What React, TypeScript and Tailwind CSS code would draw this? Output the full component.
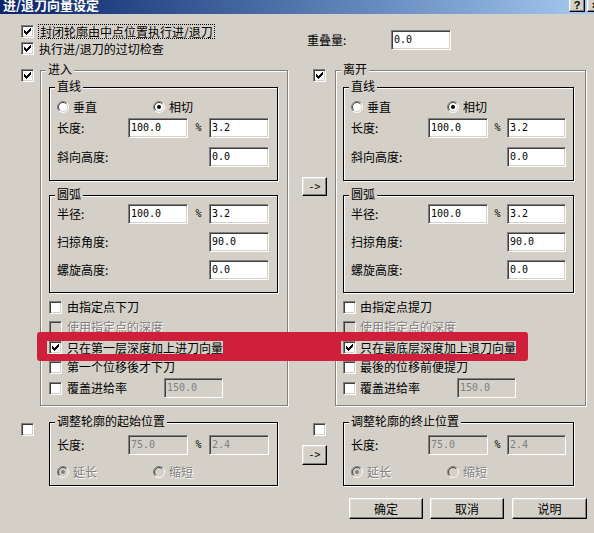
import React from "react";

const CJK = "font-['Noto_Sans_CJK_SC',sans-serif]";
const MONO = "font-['DejaVu_Sans_Mono',monospace]";
const DIS = "text-[#808080] [text-shadow:1px_1px_0_#fff]";

function Check({ checked = false, disabled = false }: { checked?: boolean; disabled?: boolean }) {
  return (
    <div
      className={`w-[13px] h-[13px] shrink-0 flex items-center justify-center border border-t-[#808080] border-l-[#808080] border-b-white border-r-white shadow-[inset_1px_1px_0_#404040,inset_-1px_-1px_0_#d4d0c8] ${
        disabled ? "bg-[#d4d0c8]" : "bg-white"
      }`}
    >
      {checked && (
        <svg width="7" height="7" viewBox="0 0 7 7">
          {[2, 3, 4, 3, 2, 1, 0].map((y, i) => (
            <rect key={i} x={i} y={y} width="1" height="3" fill={disabled ? "#808080" : "#000"} />
          ))}
        </svg>
      )}
    </div>
  );
}

function Radio({ checked = false, disabled = false }: { checked?: boolean; disabled?: boolean }) {
  return (
    <svg width="12" height="12" viewBox="0 0 12 12" className="shrink-0">
      <circle cx="6" cy="6" r="5" fill={disabled ? "#d4d0c8" : "#fff"} />
      <path d="M9.9 2.1 A5.5 5.5 0 0 0 2.1 9.9" stroke="#808080" fill="none" />
      <path d="M2.1 9.9 A5.5 5.5 0 0 0 9.9 2.1" stroke="#fff" fill="none" />
      <path d="M9.2 2.8 A4.5 4.5 0 0 0 2.8 9.2" stroke="#404040" fill="none" />
      <path d="M2.8 9.2 A4.5 4.5 0 0 0 9.2 2.8" stroke="#d4d0c8" fill="none" />
      {checked && <circle cx="6" cy="6" r="2" fill={disabled ? "#808080" : "#000"} />}
    </svg>
  );
}

function Field({ value, disabled = false, w }: { value: string; disabled?: boolean; w: string }) {
  return (
    <div
      className={`${w} h-[20px] shrink-0 flex items-center pl-[2px] border border-t-[#808080] border-l-[#808080] border-b-white border-r-white shadow-[inset_1px_1px_0_#404040,inset_-1px_-1px_0_#d4d0c8] ${MONO} text-[10px] leading-[12px] ${
        disabled ? "bg-[#d4d0c8] text-[#808080]" : "bg-white text-black"
      }`}
    >
      {value}
    </div>
  );
}

function Btn({ children, w, h }: { children: React.ReactNode; w: string; h: string }) {
  return (
    <div
      className={`${w} ${h} shrink-0 flex items-center justify-center bg-[#d4d0c8] border border-t-white border-l-white border-b-black border-r-black shadow-[inset_-1px_-1px_0_#808080,inset_1px_1px_0_#dfdfdf] text-[12px] leading-[12px] text-black`}
    >
      {children}
    </div>
  );
}

function Group({
  title,
  dark = false,
  className = "",
  children,
}: {
  title: string;
  dark?: boolean;
  className?: string;
  children: React.ReactNode;
}) {
  return (
    <fieldset
      className={`min-w-0 border ${
        dark ? "border-black" : "border-[#808080]"
      } shadow-[inset_1px_1px_0_#fff,1px_1px_0_#fff] ${className}`}
    >
      <legend className="ml-[5px] px-[2px] bg-[#d4d0c8] text-[12px] leading-[14px]">
        <span className="relative -top-[1px]">{title}</span>
      </legend>
      {children}
    </fieldset>
  );
}

function RadioRow({ a, b, disabled = false, aChecked }: { a: string; b: string; disabled?: boolean; aChecked: boolean }) {
  return (
    <div className="h-[20px] flex items-center">
      <div className="w-[96px] flex items-center gap-[4px]">
        <Radio checked={aChecked} disabled={disabled} />
        <span className={disabled ? DIS : ""}>{a}</span>
      </div>
      <div className="flex items-center gap-[4px]">
        <Radio checked={!aChecked} disabled={disabled} />
        <span className={disabled ? DIS : ""}>{b}</span>
      </div>
    </div>
  );
}

function TwoInputRow({
  label,
  v1,
  v2,
  right,
  disabled = false,
}: {
  label: string;
  v1: string;
  v2: string;
  right: boolean;
  disabled?: boolean;
}) {
  return (
    <div className="h-[20px] flex items-center">
      <span className={right ? "w-[77px]" : "w-[71px]"}>{label}</span>
      <Field value={v1} w="w-[60px]" disabled={disabled} />
      <span className={`${right ? "w-[19px]" : "w-[21px]"} text-center ${MONO} text-[10px]`}>%</span>
      <Field value={v2} w={right ? "w-[59px]" : "w-[60px]"} disabled={disabled} />
    </div>
  );
}

function OneInputRow({ label, v, right }: { label: string; v: string; right: boolean }) {
  return (
    <div className="h-[20px] flex items-center">
      <span className={right ? "w-[156px]" : "w-[152px]"}>{label}</span>
      <Field value={v} w={right ? "w-[59px]" : "w-[60px]"} />
    </div>
  );
}

function CheckRow({
  text,
  checked = false,
  disabled = false,
  right,
}: {
  text: string;
  checked?: boolean;
  disabled?: boolean;
  right: boolean;
}) {
  return (
    <div className={`h-[20px] flex items-center ${right ? "gap-[4px]" : "gap-[5px]"}`}>
      <Check checked={checked} disabled={disabled} />
      <span className={disabled ? DIS : ""}>{text}</span>
    </div>
  );
}

function Side({ right }: { right: boolean }) {
  const innerW = right ? "w-[231px]" : "w-[229px]";
  const gap = right ? "gap-[4px]" : "gap-[5px]";
  return (
    <Group title={right ? "离开" : "进入"} className={right ? "w-[251px]" : "w-[248px]"}>
      <div className={`${right ? "pl-[7px]" : "pl-[8px]"} pt-[3px] pb-[6px]`}>
        <Group title="直线" dark className={innerW}>
          <div className="pl-[7px] pt-[3px] pb-[13px]">
            <RadioRow a="垂直" b="相切" aChecked={false} />
            <div className="mt-[1px]">
              <TwoInputRow label="长度:" v1="100.0" v2="3.2" right={right} />
            </div>
            <div className="mt-[9px]">
              <OneInputRow label="斜向高度:" v="0.0" right={right} />
            </div>
          </div>
        </Group>
        <Group title="圆弧" dark className={`${innerW} mt-[7px]`}>
          <div className="pl-[7px] pt-[2px] pb-[12px]">
            <TwoInputRow label="半径:" v1="100.0" v2="3.2" right={right} />
            <div className="mt-[8px]">
              <OneInputRow label="扫掠角度:" v="90.0" right={right} />
            </div>
            <div className="mt-[8px]">
              <OneInputRow label="螺旋高度:" v="0.0" right={right} />
            </div>
          </div>
        </Group>
        <div className="mt-[4px]">
          <CheckRow text={right ? "由指定点提刀" : "由指定点下刀"} right={right} />
          <CheckRow text="使用指定点的深度" disabled right={right} />
          <div className="h-[20px] flex items-center">
            <div className={`relative z-20 bg-[#d4d0c8] -ml-[2px] pl-[2px] h-[13px] flex items-center ${gap}`}>
              <Check checked />
              <span className="leading-[13px]">{right ? "只在最底层深度加上退刀向量" : "只在第一层深度加上进刀向量"}</span>
            </div>
          </div>
          <CheckRow text={right ? "最後的位移前便提刀" : "第一个位移後才下刀"} right={right} />
          <div className="h-[22px] flex items-center">
            <div className={`flex items-center ${gap}`}>
              <Check />
              <span className="w-[97px]">覆盖进给率</span>
            </div>
            <Field value="150.0" w="w-[59px]" disabled />
          </div>
        </div>
      </div>
    </Group>
  );
}

function AdjustGroup({ right }: { right: boolean }) {
  return (
    <Group
      title={right ? "调整轮廓的终止位置" : "调整轮廓的起始位置"}
      dark
      className={right ? "w-[231px]" : "w-[229px]"}
    >
      <div className="pl-[7px] pt-[6px] pb-[3px]">
        <TwoInputRow label="长度:" v1="75.0" v2="2.4" right={right} disabled />
        <div className="mt-[7px]">
          <RadioRow a="延长" b="缩短" aChecked disabled />
        </div>
      </div>
    </Group>
  );
}

export default function App() {
  return (
    <div className={`relative w-[594px] h-[533px] overflow-hidden bg-[#d4d0c8] text-black text-[12px] leading-[14px] ${CJK}`}>
      {/* title bar */}
      <div className="h-[14px] overflow-hidden flex items-start bg-gradient-to-r from-[#0a246a] to-[#a6caf0]">
        <span className="-mt-[2px] ml-[3px] text-white font-bold text-[13px] leading-[14px]">进/退刀向量设定</span>
        <div className="ml-auto -mr-[9px] flex items-start -mt-[2px]">
          <Btn w="w-[16px]" h="h-[14px]">
            <span className="font-['Liberation_Sans',sans-serif] font-bold text-[11px]">?</span>
          </Btn>
          <div className="ml-[2px]">
            <Btn w="w-[16px]" h="h-[14px]">
              <span className="font-['Liberation_Sans',sans-serif] font-bold text-[11px]">×</span>
            </Btn>
          </div>
        </div>
      </div>

      {/* top options */}
      <div className="flex h-[49px]">
        <div className="w-[286px] pl-[21px] pt-[9px]">
          <div className="h-[17px] flex items-center gap-[4px]">
            <Check checked />
            <span className="border border-dotted border-black px-[1px] leading-[13px]">封闭轮廓由中点位置执行进/退刀</span>
          </div>
          <div className="h-[17px] flex items-center gap-[5px]">
            <Check checked />
            <span>执行进/退刀的过切检查</span>
          </div>
        </div>
        <div className="ml-[21px] pt-[16px] flex items-start">
          <div className="h-[20px] flex items-center">
            <span className="w-[84px]">重叠量:</span>
            <Field value="0.0" w="w-[60px]" />
          </div>
        </div>
      </div>

      {/* main panels */}
      <div className="flex pl-[21px] items-start">
        <div className="w-[19px] pt-[6px]">
          <Check checked />
        </div>
        <Side right={false} />
        <div className="ml-[14px] w-[33px] flex flex-col">
          <div className="ml-[11px] mt-[6px]">
            <Check checked />
          </div>
          <div className="mt-[95px]">
            <Btn w="w-[25px]" h="h-[19px]">
              <span className={`${MONO} text-[10px]`}>-&gt;</span>
            </Btn>
          </div>
        </div>
        <Side right />
      </div>

      {/* adjust section */}
      <div className="flex pl-[21px] mt-[9px] items-start">
        <div className="w-[28px] pt-[8px]">
          <Check />
        </div>
        <AdjustGroup right={false} />
        <div className="ml-[24px] w-[41px] flex flex-col">
          <div className="ml-[11px] mt-[8px]">
            <Check />
          </div>
          <div className="mt-[9px]">
            <Btn w="w-[25px]" h="h-[20px]">
              <span className={`${MONO} text-[10px]`}>-&gt;</span>
            </Btn>
          </div>
        </div>
        <AdjustGroup right />
      </div>

      {/* buttons */}
      <div className="flex pl-[349px] mt-[12px]">
        <Btn w="w-[74px]" h="h-[21px]">确定</Btn>
        <div className="ml-[7px]">
          <Btn w="w-[74px]" h="h-[21px]">取消</Btn>
        </div>
        <div className="ml-[8px]">
          <Btn w="w-[75px]" h="h-[21px]">说明</Btn>
        </div>
      </div>

      {/* red annotation */}
      <div className="absolute left-[37px] top-[332px] w-[491px] h-[29px] bg-[#cf1f3b] rounded-[3px] z-10" />
    </div>
  );
}
